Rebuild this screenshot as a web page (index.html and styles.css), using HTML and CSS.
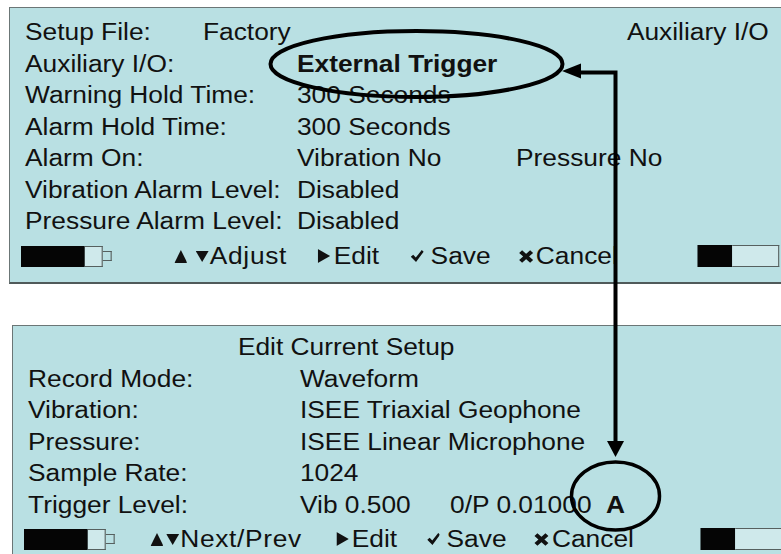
FILE: index.html
```html
<!DOCTYPE html>
<html lang="en">

<head>
  <meta charset="UTF-8">
  <meta name="viewport" content="width=device-width, initial-scale=1.0">
  <title>Auxiliary I/O - Edit Current Setup</title>
  <link rel="stylesheet" href="styles.css">
</head>

<body>
  <!-- Auxiliary I/O screen -->
  <div class="panel panel-setup">
    <div class="lcd">
      <div class="row row-head">
        <span>Setup File:</span>
        <span>Factory</span>
        <span>Auxiliary I/O</span>
      </div>
      <div class="row"><span>Auxiliary I/O:</span><span class="bold">External Trigger</span></div>
      <div class="row"><span>Warning Hold Time:</span><span>300 Seconds</span></div>
      <div class="row"><span>Alarm Hold Time:</span><span>300 Seconds</span></div>
      <div class="row">
        <span>Alarm On:</span>
        <span class="split"><span>Vibration No</span><span>Pressure No</span></span>
      </div>
      <div class="row"><span>Vibration Alarm Level:</span><span>Disabled</span></div>
      <div class="row"><span>Pressure Alarm Level:</span><span>Disabled</span></div>

      <div class="keys keys-setup">
        <span class="batt">
          <span class="batt-full"></span><span class="batt-empty"></span><span class="batt-nub"></span>
        </span>
        <span class="key">
          <svg class="ico ico-tri" viewBox="0 0 10 9" preserveAspectRatio="none"><path d="M5 0 10 9H0z"/></svg>
          <svg class="ico ico-tri ico-down" viewBox="0 0 10 9" preserveAspectRatio="none"><path d="M0 0h10L5 9z"/></svg>Adjust
        </span>
        <span class="key">
          <svg class="ico ico-play" viewBox="0 0 9 11" preserveAspectRatio="none"><path d="M0 0l9 5.5L0 11z"/></svg>Edit
        </span>
        <span class="key">
          <svg class="ico ico-check" viewBox="0 0 11 10" preserveAspectRatio="none"><path d="M0 5.6 2.1 3.9 4.3 6.3 9.4 0 11 1.4 4.5 10z"/></svg>Save
        </span>
        <span class="key">
          <svg class="ico ico-cross" viewBox="0 0 12 12"><path d="M1.8 1.8l8.4 8.4M10.2 1.8l-8.4 8.4"/></svg>Cancel
        </span>
        <span class="batt batt-right">
          <span class="batt-full"></span><span class="batt-empty"></span>
        </span>
      </div>
    </div>
  </div>

  <!-- Edit Current Setup screen -->
  <div class="panel panel-edit">
    <div class="lcd">
      <div class="row row-title">Edit Current Setup</div>
      <div class="row"><span>Record Mode:</span><span>Waveform</span></div>
      <div class="row"><span>Vibration:</span><span>ISEE Triaxial Geophone</span></div>
      <div class="row"><span>Pressure:</span><span>ISEE Linear Microphone</span></div>
      <div class="row"><span>Sample Rate:</span><span>1024</span></div>
      <div class="row">
        <span>Trigger Level:</span>
        <span class="split split-trigger"><span>Vib 0.500</span><span>0/P 0.01000</span><span class="bold">A</span></span>
      </div>

      <div class="keys keys-edit">
        <span class="batt">
          <span class="batt-full"></span><span class="batt-empty"></span><span class="batt-nub"></span>
        </span>
        <span class="key">
          <svg class="ico ico-tri" viewBox="0 0 10 9" preserveAspectRatio="none"><path d="M5 0 10 9H0z"/></svg>
          <svg class="ico ico-tri ico-down" viewBox="0 0 10 9" preserveAspectRatio="none"><path d="M0 0h10L5 9z"/></svg>Next/Prev
        </span>
        <span class="key">
          <svg class="ico ico-play" viewBox="0 0 9 11" preserveAspectRatio="none"><path d="M0 0l9 5.5L0 11z"/></svg>Edit
        </span>
        <span class="key">
          <svg class="ico ico-check" viewBox="0 0 11 10" preserveAspectRatio="none"><path d="M0 5.6 2.1 3.9 4.3 6.3 9.4 0 11 1.4 4.5 10z"/></svg>Save
        </span>
        <span class="key">
          <svg class="ico ico-cross" viewBox="0 0 12 12"><path d="M1.8 1.8l8.4 8.4M10.2 1.8l-8.4 8.4"/></svg>Cancel
        </span>
        <span class="batt batt-right">
          <span class="batt-full"></span><span class="batt-empty"></span>
        </span>
      </div>
    </div>
  </div>

  <!-- callout marks drawn over both screens -->
  <svg class="callout" viewBox="0 0 781 554" width="781" height="554">
    <ellipse cx="416.5" cy="64" rx="146" ry="33"/>
    <path d="M580 72.5H615.5V443"/>
    <path class="head" d="M562 71 581 63.5V78.5z"/>
    <path class="head" d="M615.5 457 607 441H624z"/>
    <ellipse class="thin" cx="615.5" cy="496" rx="44" ry="34"/>
  </svg>
</body>

</html>
```

FILE: styles.css
```css
body {
  margin: 0;
  position: relative;
  height: 554px;
  overflow: hidden;
  background: #fff;
  font-family: "Liberation Sans", Arial, sans-serif;
  font-size: 23.5px;
  color: #111;
}

.panel {
  width: 800px;
  box-sizing: border-box;
  background: #b9e0e3;
  border-top: 1px solid #6b7676;
  border-left: 1px solid #6b7676;
}

.panel-setup {
  margin: 7px 0 0 9px;
  padding: 9px 0 10px 11px;
  border-bottom: 2px solid #505a5a;
}

.panel-edit {
  margin: 41px 0 0 12px;
  padding: 6px 0 0 11px;
  height: 240px;
}

/* the device font is wide, so the whole screen is stretched */
.lcd {
  transform: scaleX(1.12);
  transform-origin: 0 0;
  white-space: nowrap;
}

.row {
  display: grid;
  grid-template-columns: 242.8px auto;
  padding-left: 3.6px;
  line-height: 31.5px;
}

.panel-edit .row {
  line-height: 31.6px;
}

.row-head {
  grid-template-columns: 158.9px 378.5px auto;
}

.row-title {
  display: block;
  padding-left: 191px;
}

.bold {
  font-weight: bold;
}

.split {
  display: grid;
  grid-template-columns: 195.6px auto;
}

.split-trigger {
  grid-template-columns: 134px 139.2px auto;
}

/* soft key bar */
.keys {
  display: grid;
  align-items: center;
  height: 31.5px;
  margin-top: 3px;
}

.keys-setup {
  grid-template-columns: 136.6px 128.6px 83px 95.5px 159.9px auto;
}

.keys-edit {
  margin-top: 2px;
  grid-template-columns: 112.5px 166.1px 81.2px 95.6px 148.8px auto;
}

.key {
  display: flex;
  align-items: center;
}

.keys-setup .key:nth-child(2),
.keys-edit .key:nth-child(2) {
  letter-spacing: 0.6px;
}

.ico {
  fill: #111;
  flex: none;
}

.ico-tri {
  width: 11.5px;
  height: 13px;
  margin-right: 8px;
}

.keys-edit .ico-tri {
  margin-right: 3px;
}

.ico-tri.ico-down {
  height: 11px;
  margin-right: 1px;
}

.ico-play {
  width: 11px;
  height: 14px;
  margin-right: 3px;
}

.ico-check {
  width: 11.5px;
  height: 12px;
  margin-right: 6px;
}

.ico-cross {
  width: 14px;
  height: 15px;
  margin-right: 2px;
  fill: none;
  stroke: #111;
  stroke-width: 3.2;
}

.batt {
  display: flex;
  align-items: center;
}

.batt-full {
  width: 57px;
  height: 21px;
  background: #050505;
}

.batt-empty {
  width: 15px;
  height: 19px;
  background: #cfe9eb;
  border: 1px solid #56605f;
  border-left: none;
}

.batt-nub {
  width: 6.5px;
  height: 8px;
  border: 1px solid #56605f;
  border-left: none;
}

.batt-right .batt-full {
  width: 31px;
  height: 22px;
}

.batt-right .batt-empty {
  width: 41px;
  height: 20px;
}

.callout {
  position: absolute;
  top: 0;
  left: 0;
  fill: none;
  stroke: #000;
  stroke-width: 4;
}

.callout .head {
  fill: #000;
  stroke: none;
}

.callout .thin {
  stroke-width: 3.5;
}
```
